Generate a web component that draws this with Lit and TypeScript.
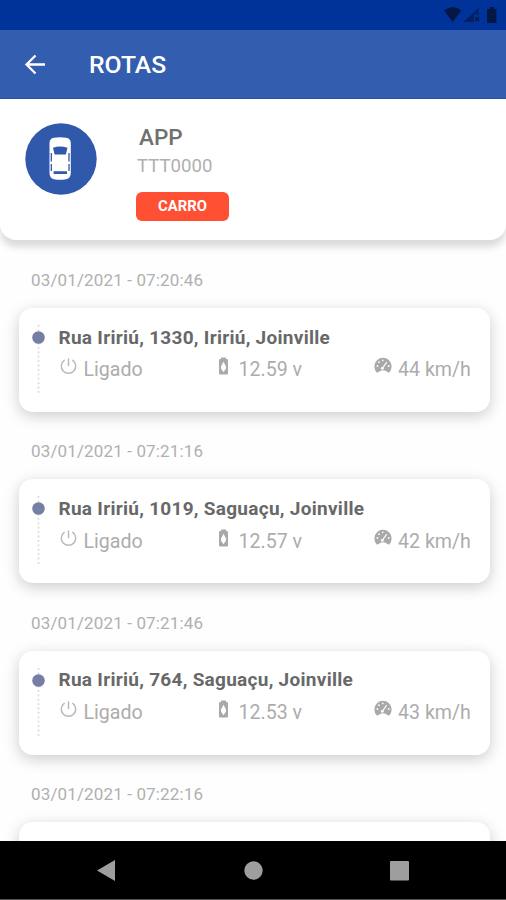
import { LitElement, html, css } from "lit";
import { customElement, property } from "lit/decorators.js";

interface Stop {
  date: string;
  address: string;
  volts: string;
  speed: string;
}

const STOPS: Stop[] = [
  { date: "03/01/2021 - 07:20:46", address: "Rua Iririú, 1330, Iririú, Joinville", volts: "12.59 v", speed: "44 km/h" },
  { date: "03/01/2021 - 07:21:16", address: "Rua Iririú, 1019, Saguaçu, Joinville", volts: "12.57 v", speed: "42 km/h" },
  { date: "03/01/2021 - 07:21:46", address: "Rua Iririú, 764, Saguaçu, Joinville", volts: "12.53 v", speed: "43 km/h" },
  { date: "03/01/2021 - 07:22:16", address: "", volts: "", speed: "" },
];

@customElement("route-stop")
export class RouteStop extends LitElement {
  @property({ attribute: false }) stop!: Stop;

  static styles = css`
    :host { display: block; height: 171.35px; flex: none; }
    .date { height: 54px; padding: 0 0 0 31px; line-height: 53px; font-size: 17px; letter-spacing: 0.14px; color: #b0b0b0; }
    .card {
      box-sizing: border-box; height: 104px; margin: 0 16px 0 19px; padding: 17px 0 0 13px;
      display: flex; border-radius: 14px; background: #fff;
      box-shadow: 0 4px 15px rgba(0, 0, 0, 0.2);
    }
    .rail { width: 13px; height: 70px; margin-right: 13.5px; flex: none; }
    .rail svg { display: block; }
    .info { flex: 1; }
    .address { font-size: 19px; font-weight: 700; letter-spacing: 0.28px; line-height: 24px; padding-top: 0.6px; color: #686868; white-space: nowrap; }
    .stats { display: grid; grid-template-columns: 158px 157.5px auto; margin-top: 7.8px; line-height: 26px; font-size: 19.6px; color: #acacac; white-space: nowrap; }
    .stat { display: flex; }
    .stat svg { flex: none; display: block; }
    .power { margin: 1px 7px 0 1px; }
    .battery { margin: 0 10px 0 1px; }
    .gauge { margin: 0 6px 0 0; }
  `;

  render() {
    const s = this.stop;
    return html`
      <div class="date">${s.date}</div>
      <div class="card">
        ${s.address
          ? html`
              <div class="rail">
                <svg width="13" height="70" viewBox="0 0 13 70">
                  <path d="M6.5 0V70" stroke="#d8d8d8" stroke-width="1.6" stroke-dasharray="1.8 2.6" />
                  <circle cx="6.5" cy="12.5" r="6.3" fill="#757fa5" />
                </svg>
              </div>
              <div class="info">
                <div class="address">${s.address}</div>
                <div class="stats">
                  <div class="stat">
                    <svg class="power" width="17" height="17" viewBox="0 0 17 17" fill="none" stroke="#bababa" stroke-width="1.5" stroke-linecap="round">
                      <path d="M8.5 1V7.6M4.2 2.4A7.2 7.2 0 1 0 12.8 2.4" />
                    </svg>
                    <span>Ligado</span>
                  </div>
                  <div class="stat">
                    <svg class="battery" width="11" height="18" viewBox="0 0 11 18">
                      <path fill="#a9a9a9" fill-rule="evenodd" d="M3 2V.6H8V2H9Q10 2 10 3.2V16.6Q10 17.6 9 17.6H2Q1 17.6 1 16.6V3.2Q1 2 2 2ZM5.5 4.8L3 9.6V11.6L5.5 15.2L8 11.6V9.6Z" />
                    </svg>
                    <span>${s.volts}</span>
                  </div>
                  <div class="stat">
                    <svg class="gauge" width="18" height="17" viewBox="0 0 18 17">
                      <path fill="#a9a9a9" d="M2.6 15.2A8.6 8.6 0 1 1 15.4 15.2Q14.9 15.7 14.2 15.4L11.5 13.8Q9 12.8 6.5 13.8L3.8 15.4Q3.1 15.7 2.6 15.2Z" />
                      <path d="M8.6 11L12.4 5.6" stroke="#fff" stroke-width="1.2" stroke-linecap="round" />
                      <g fill="#fff"><circle cx="8.8" cy="3.4" r=".8" /><circle cx="5" cy="5.2" r=".9" /><circle cx="3.4" cy="9" r=".9" /><circle cx="14.7" cy="9" r=".9" /><circle cx="8.3" cy="11.3" r="1.4" /></g>
                    </svg>
                    <span>${s.speed}</span>
                  </div>
                </div>
              </div>`
          : null}
      </div>
    `;
  }
}

@customElement("app-root")
export class AppRoot extends LitElement {
  static styles = css`
    :host {
      display: flex; flex-direction: column; height: 900px; width: 506px; overflow: hidden;
      background: #fefefe; font-family: Roboto, "Liberation Sans", sans-serif;
    }
    svg { display: block; flex: none; }
    .status { height: 30px; background: #003399; display: flex; justify-content: flex-end; flex: none; }
    .status svg { margin-right: 6px; }
    .bar {
      height: 69px; background: #335daf; color: #fff; display: flex; align-items: center; flex: none;
      padding-left: 24px; box-sizing: border-box; border-bottom: 1px solid #2850a3;
    }
    .title { font-size: 24.7px; font-weight: 500; margin-left: 43px; line-height: 30px; padding-top: 2px; }
    .vehicle {
      height: 141px; box-sizing: border-box; background: #fff; border-radius: 0 0 16px 16px; flex: none;
      box-shadow: 0 7px 7px rgba(0, 0, 0, 0.14); display: flex; padding: 24px 0 0 25px;
      position: relative; z-index: 1;
    }
    .details { margin-left: 39px; }
    .name { font-size: 22.5px; line-height: 28px; color: #707070; font-weight: 500; padding-left: 3px; }
    .plate { font-size: 18.6px; line-height: 24px; color: #b0b0b0; margin-top: 3px; padding-left: 1px; }
    .tag {
      width: 93px; height: 29px; border-radius: 6px; background: #ff5033; color: #fff; text-align: center;
      font-size: 14.8px; line-height: 29.5px; font-weight: 700; margin-top: 14px;
    }
    .list { flex: 1; min-height: 0; overflow: hidden; padding-top: 14px; display: flex; flex-direction: column; }
    .nav { height: 59px; box-sizing: border-box; background: #000; border-bottom: 1px solid #555; flex: none; display: flex; }
  `;

  render() {
    return html`
      <div class="status">
        <svg width="56" height="30" viewBox="0 0 56 30" fill="#061746">
          <path d="M0 10.5Q8.7 3.5 17.4 10.5L8.7 22Z" />
          <path d="M19.5 22L34.5 8V14.5H30V22Z" opacity=".65" />
          <path d="M31.5 17L35 21M35 17L31.5 21" stroke="#061746" stroke-width="1.5" />
          <path d="M43 9H45.5V7H50V9H52.5V23H43Z" />
        </svg>
      </div>
      <div class="bar">
        <svg width="22" height="22" viewBox="0 0 22 22" fill="none" stroke="#fff" stroke-width="2.3">
          <path d="M21 11.5H3M11.5 2.5L2.5 11.5L11.5 20.5" />
        </svg>
        <div class="title">ROTAS</div>
      </div>
      <div class="vehicle">
        <svg width="72" height="72" viewBox="0 0 72 72">
          <circle cx="36" cy="36" r="35.7" fill="#3059ac" />
          <path fill="#fff" d="M24.5 20Q24.5 15.5 29 14.8Q35 13.6 41 14.8Q45.8 15.5 45.8 20V50Q45.8 55.5 41 56.3Q35 57.3 29 56.3Q24.5 55.5 24.5 50Z" />
          <path fill="#3059ac" d="M28 24.8Q35 22 42.5 24.8L40.8 31.5H29.6ZM28.6 48.2H42V51H28.6Z" />
          <path d="M26.3 30V38.5M26.3 41V48M44 30V38.5M44 41V48" stroke="#3059ac" stroke-width="1.3" fill="none" />
        </svg>
        <div class="details">
          <div class="name">APP</div>
          <div class="plate">TTT0000</div>
          <div class="tag">CARRO</div>
        </div>
      </div>
      <div class="list">${STOPS.map((s) => html`<route-stop .stop=${s}></route-stop>`)}</div>
      <div class="nav">
        <svg width="506" height="58" viewBox="0 0 506 58" fill="#9e9e9e">
          <path d="M97 29.5L115 19V40Z" />
          <circle cx="253.5" cy="29.5" r="9.2" />
          <rect x="390" y="20" width="19" height="19.5" rx="1" />
        </svg>
      </div>
    `;
  }
}
